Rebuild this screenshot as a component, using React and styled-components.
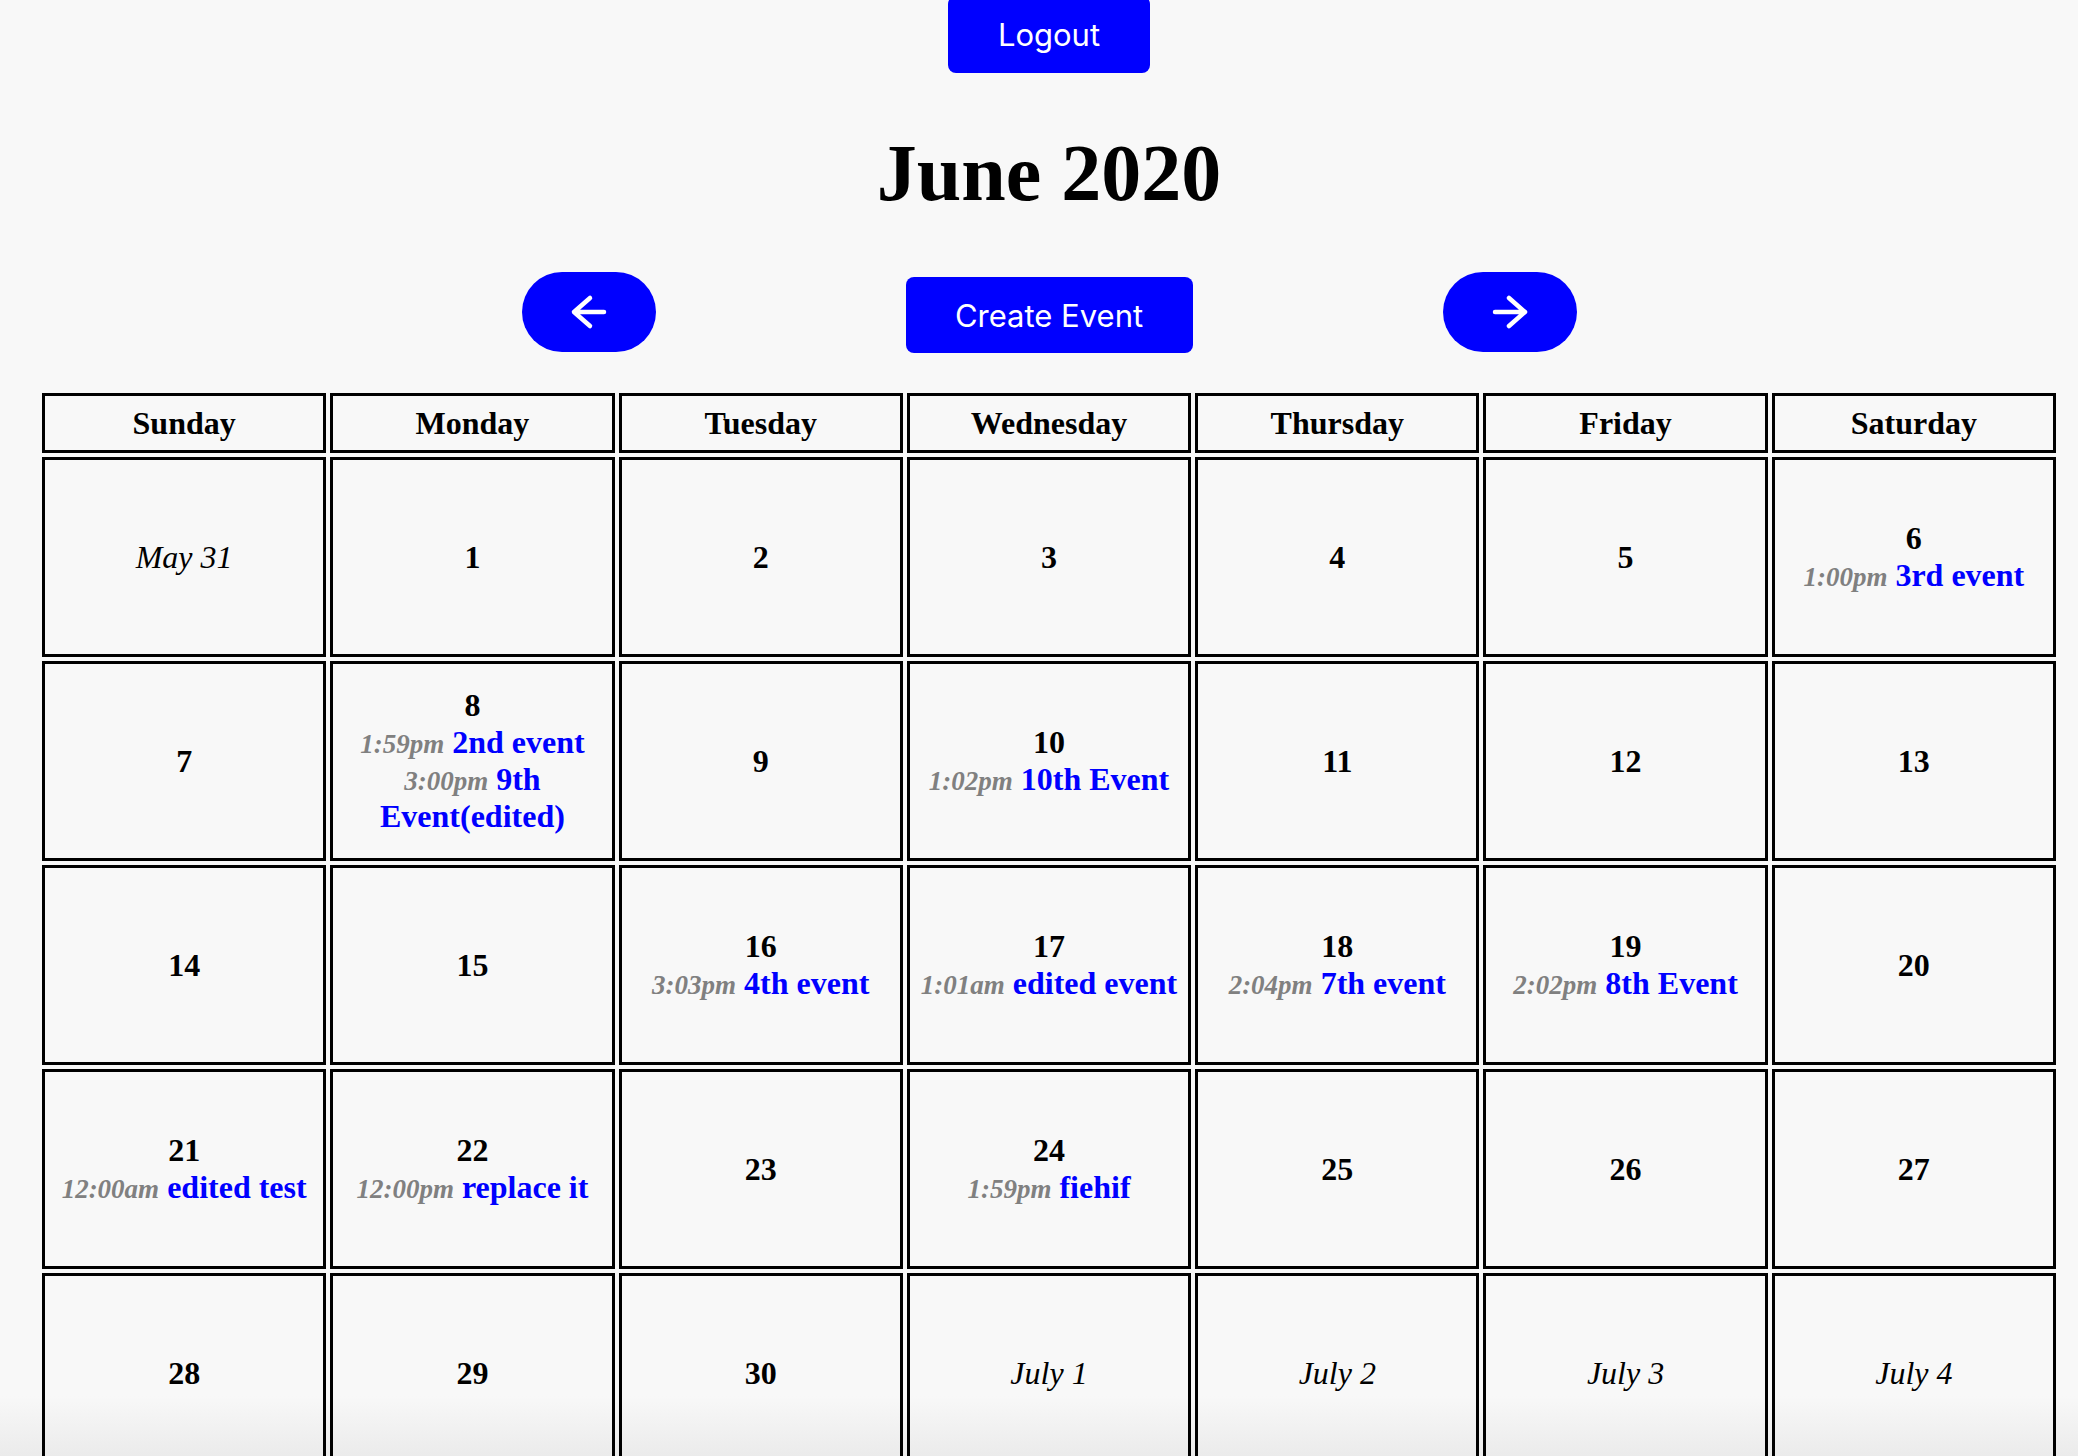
import React from "react";
import styled, { createGlobalStyle } from "styled-components";

const GlobalStyle = createGlobalStyle`
    html {
        min-height: 100%;
        background: #f8f8f8 linear-gradient(to bottom, #f8f8f8 calc(100% - 60px), #ebebeb 100%) fixed;
    }
    body {
        margin: 0;
        font-family: "Liberation Serif", "Times New Roman", serif;
        color: #000;
    }
`;

const DAYS = ["Sunday", "Monday", "Tuesday", "Wednesday", "Thursday", "Friday", "Saturday"];

// events keyed by day of June
const EVENTS = {
    6: [{ time: "1:00pm", title: "3rd event" }],
    8: [
        { time: "1:59pm", title: "2nd event" },
        { time: "3:00pm", title: "9th Event(edited)" },
    ],
    10: [{ time: "1:02pm", title: "10th Event" }],
    16: [{ time: "3:03pm", title: "4th event" }],
    17: [{ time: "1:01am", title: "edited event" }],
    18: [{ time: "2:04pm", title: "7th event" }],
    19: [{ time: "2:02pm", title: "8th Event" }],
    21: [{ time: "12:00am", title: "edited test" }],
    22: [{ time: "12:00pm", title: "replace it" }],
    24: [{ time: "1:59pm", title: "fiehif" }],
};

// June 2020 grid, May 31 to July 4
const buildDays = () => {
    const days = [{ label: "May 31", outside: true }];
    for (let d = 1; d <= 30; d++) days.push({ label: String(d), day: d });
    for (let d = 1; d <= 4; d++) days.push({ label: `July ${d}`, outside: true });
    return days;
};

const ArrowIcon = ({ dir }) => (
    <svg width="40" height="36" viewBox="0 0 40 36" fill="none" stroke="#fff" strokeWidth="4.5" strokeLinecap="round" strokeLinejoin="round">
        {dir === "left" ? (
            <path d="M5 18 H35 M21 4 L5 18 L21 32" />
        ) : (
            <path d="M35 18 H5 M19 4 L35 18 L19 32" />
        )}
    </svg>
);

const App = () => {
    const days = buildDays();

    return (
        <Page>
            <GlobalStyle />
            <Header>
                <LogoutButton>Logout</LogoutButton>
                <Title>June 2020</Title>
                <NavRow>
                    <ArrowButton aria-label="Previous month">
                        <ArrowIcon dir="left" />
                    </ArrowButton>
                    <CreateButton>Create Event</CreateButton>
                    <ArrowButton aria-label="Next month">
                        <ArrowIcon dir="right" />
                    </ArrowButton>
                </NavRow>
            </Header>
            <Calendar>
                {DAYS.map((name) => (
                    <HeadCell key={name}>{name}</HeadCell>
                ))}
                {days.map((d) => (
                    <DayCell key={d.label}>
                        <DayLabel $outside={d.outside}>{d.label}</DayLabel>
                        {(EVENTS[d.day] || []).map((ev) => (
                            <EventLine key={ev.time + ev.title}>
                                <EventTime>{ev.time}</EventTime> <EventTitle>{ev.title}</EventTitle>
                            </EventLine>
                        ))}
                    </DayCell>
                ))}
            </Calendar>
        </Page>
    );
};

export default App;

// Styled Components
const Page = styled.div`
    padding-left: 20px;
    padding-bottom: 40px;
`;

const Header = styled.div`
    display: flex;
    flex-direction: column;
    align-items: center;
`;

const BlueButton = styled.button`
    background-color: #0000ff;
    color: #fff;
    border: none;
    font-family: Inter, "Liberation Sans", sans-serif;
    font-size: 31px;
    cursor: pointer;
    display: flex;
    align-items: center;
    justify-content: center;
`;

const LogoutButton = styled(BlueButton)`
    width: 202px;
    height: 77px;
    margin-top: -4px;
    border-radius: 8px;
`;

const Title = styled.h1`
    margin: 52px 0 51px;
    font-size: 80px;
    line-height: 96px;
    font-weight: bold;
`;

const NavRow = styled.div`
    display: flex;
    align-items: flex-end;
    gap: 250px;
`;

const ArrowButton = styled(BlueButton)`
    width: 134px;
    height: 80px;
    border-radius: 40px;
    margin-bottom: 1px;
`;

const CreateButton = styled(BlueButton)`
    width: 287px;
    height: 76px;
    border-radius: 8px;
`;

const Calendar = styled.div`
    width: 2014px;
    margin: 40px auto 0;
    display: grid;
    grid-template-columns: repeat(7, 1fr);
    grid-template-rows: 60px;
    grid-auto-rows: 200px;
    gap: 4px;
`;

const Cell = styled.div`
    box-sizing: border-box;
    border: 3px solid #000;
    display: flex;
    flex-direction: column;
    align-items: center;
    justify-content: center;
    text-align: center;
    font-size: 32px;
    padding: 0 6px;
`;

const HeadCell = styled(Cell)`
    font-weight: bold;
`;

const DayCell = styled(Cell)``;

const DayLabel = styled.div`
    font-weight: ${(p) => (p.$outside ? "normal" : "bold")};
    font-style: ${(p) => (p.$outside ? "italic" : "normal")};
`;

const EventLine = styled.div`
    font-weight: bold;
`;

const EventTime = styled.span`
    color: #808080;
    font-style: italic;
    font-weight: bold;
    font-size: 27px;
`;

const EventTitle = styled.span`
    color: #0000ff;
    font-weight: bold;
`;
